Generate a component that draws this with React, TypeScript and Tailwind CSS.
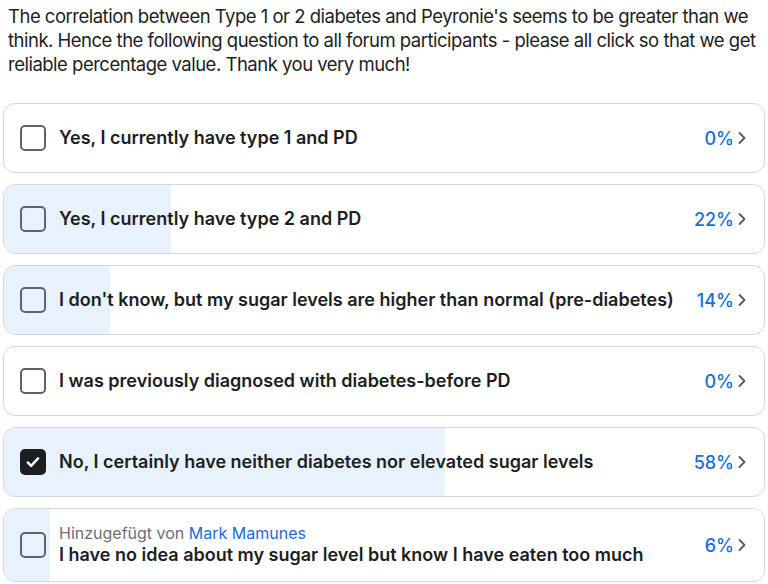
import React from "react";

const options = [
  { text: "Yes, I currently have type 1 and PD", pct: 0, checked: false },
  { text: "Yes, I currently have type 2 and PD", pct: 22, checked: false },
  { text: "I don't know, but my sugar levels are higher than normal (pre-diabetes)", pct: 14, checked: false },
  { text: "I was previously diagnosed with diabetes-before PD", pct: 0, checked: false },
  { text: "No, I certainly have neither diabetes nor elevated sugar levels", pct: 58, checked: true },
  { text: "I have no idea about my sugar level but know I have eaten too much", pct: 6, checked: false, addedBy: "Mark Mamunes" },
];

function Check({ checked }: { checked: boolean }) {
  if (checked) {
    return (
      <div className="w-[26px] h-[26px] rounded-[5px] bg-[#1c1e21] flex items-center justify-center shrink-0">
        <svg width="18" height="18" viewBox="0 0 16 16" fill="none">
          <path d="M3.3 8.4l3 3 6.2-6.6" stroke="white" strokeWidth="2.2" strokeLinecap="round" strokeLinejoin="round" />
        </svg>
      </div>
    );
  }
  return <div className="w-[26px] h-[26px] rounded-[5px] border-2 border-[#5f646b] shrink-0" />;
}

export default function App() {
  return (
    <div className="w-[768px] h-[584px] bg-white overflow-hidden" style={{ fontFamily: "Inter, 'Noto Sans', sans-serif" }}>
      <p className="pl-2 pr-0 pt-1 text-[18.5px] leading-[24px] text-[#1c1e21] tracking-[-0.5px]">
        The correlation between Type 1 or 2 diabetes and Peyronie's seems to be greater than we think. Hence the following question to all forum participants - please all click so that we get reliable percentage value. Thank you very much!
      </p>
      <div className="mt-[27px] px-[3px] flex flex-col gap-[11px]">
        {options.map((o, i) => (
          <div
            key={i}
            className={`relative overflow-hidden rounded-[12px] border border-[#d6d7d9] bg-white ${o.addedBy ? "h-[74px]" : "h-[70px]"}`}
          >
            <div className="absolute inset-y-0 left-0 bg-[#e7f2fe]" style={{ width: `${o.pct}%` }} />
            <div className="relative h-full flex items-center pl-[16px] pr-[17px]">
              <Check checked={o.checked} />
              <div className="ml-[13px] flex-1 min-w-0">
                {o.addedBy && (
                  <div className="text-[16px] leading-[20px] text-[#6b6f75]">
                    Hinzugefügt von <span className="text-[#1a6ed8]">{o.addedBy}</span>
                  </div>
                )}
                <div className="text-[18px] leading-[24px] font-semibold text-[#1c1e21] whitespace-nowrap">
                  {o.text}
                </div>
              </div>
              <div className="flex items-center ml-2">
                <span className="text-[18px] font-medium text-[#1a6ed8]">{o.pct}%</span>
                <svg className="ml-[3px]" width="10" height="14" viewBox="0 0 10 14" fill="none">
                  <path d="M2.5 2l5 5-5 5" stroke="#55595f" strokeWidth="1.8" strokeLinecap="round" strokeLinejoin="round" />
                </svg>
              </div>
            </div>
          </div>
        ))}
      </div>
    </div>
  );
}
